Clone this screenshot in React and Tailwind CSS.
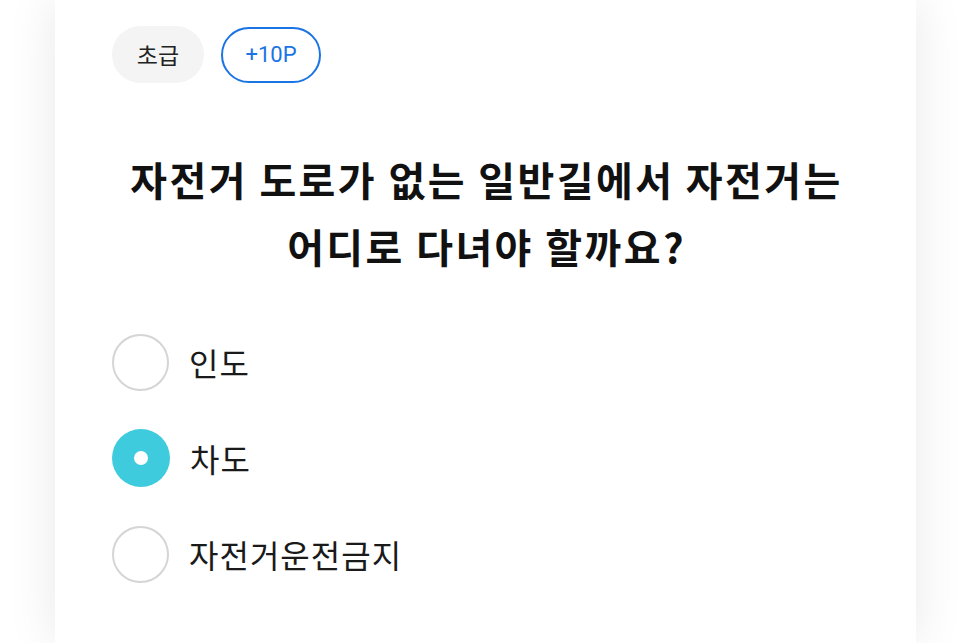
import React from "react";

const options = [
  { label: "인도", selected: false },
  { label: "차도", selected: true },
  { label: "자전거운전금지", selected: false },
];

export default function App() {
  return (
    <div className="w-full h-[643px] bg-white overflow-hidden flex justify-center">
      <div
        className="w-[861px] h-full bg-white shadow-[0_0_48px_rgba(0,0,0,0.09)] pl-[57px] pr-[55px] pt-[26px]"
        style={{ fontFamily: '"Noto Sans CJK KR", "Noto Sans", sans-serif' }}
      >
        <div className="flex items-center gap-[17px]">
          <div className="w-[92px] h-[57px] rounded-full bg-[#f4f4f4] flex items-center justify-center text-[23px] text-[#222]">
            초급
          </div>
          <div
            className="w-[100px] h-[56px] rounded-full border-2 border-[#1b74e4] flex items-center justify-center text-[22px] text-[#1b74e4]"
            style={{ fontFamily: 'Roboto, "Noto Sans CJK KR", sans-serif' }}
          >
            +10P
          </div>
        </div>

        <h1 className="mt-[63px] text-center text-[40px] leading-[67px] tracking-[2.4px] font-bold text-[#111]">
          자전거 도로가 없는 일반길에서 자전거는
          <br />
          어디로 다녀야 할까요?
        </h1>

        <div className="mt-[53px] flex flex-col gap-[38px]">
          {options.map((o) => (
            <div key={o.label} className="flex items-center gap-[20px] h-[58px]">
              {o.selected ? (
                <div className="w-[58px] h-[58px] rounded-full bg-[#3ecbdd] flex items-center justify-center">
                  <div className="w-[14px] h-[14px] rounded-full bg-white" />
                </div>
              ) : (
                <div className="w-[57px] h-[57px] rounded-full border-[2.5px] border-[#d5d5d5] bg-white" />
              )}
              <span className="text-[32px] tracking-[1px] text-[#1a1a1a]">{o.label}</span>
            </div>
          ))}
        </div>
      </div>
    </div>
  );
}
